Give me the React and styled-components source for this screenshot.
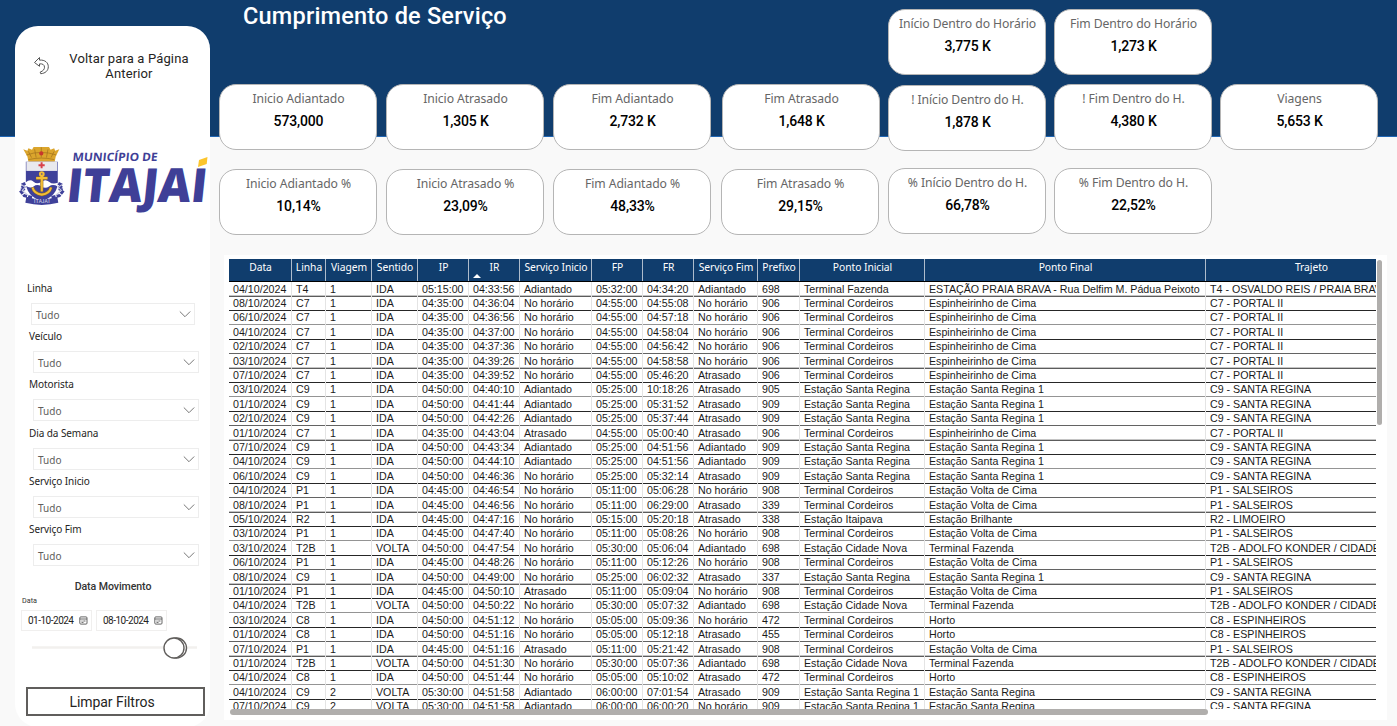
import React from "react";
import styled, { createGlobalStyle } from "styled-components";

const din = '"Roboto", "Liberation Sans", sans-serif';
const segoe = '"Noto Sans", "Open Sans", sans-serif';

const Global = createGlobalStyle`
  * { box-sizing: border-box; }
  html, body { margin: 0; padding: 0; overflow: hidden; }
`;

const Page = styled.div`
  width: 1397px;
  height: 726px;
  display: flex;
  overflow: hidden;
  font-family: ${din};
  background: linear-gradient(#103d6d 0 136px, #1f66b5 136px 137px, #f9f9f9 137px);
`;

/* ---------- sidebar ---------- */

const Sidebar = styled.aside`
  width: 195px;
  height: 701px;
  margin: 26px 0 0 15px;
  flex: none;
  display: flex;
  flex-direction: column;
  background: #fff;
  border-radius: 23px;
`;

const BackLink = styled.div`
  height: 116px;
  padding: 25px 16px 0 18px;
  display: flex;
  align-items: flex-start;
  justify-content: space-between;
`;

const BackIcon = styled.svg`
  width: 18px;
  height: 20px;
  margin-top: 5px;
`;

const BackText = styled.div`
  width: 130px;
  font-size: 13px;
  line-height: 15px;
  letter-spacing: 0.14px;
  text-align: center;
  color: #252423;
`;

const Logo = styled.svg`
  width: 195px;
  height: 75px;
  flex: none;
`;

const Filters = styled.div`
  padding: 63px 0 0 14px;
  display: flex;
  flex-direction: column;
`;

const Filter = styled.div`
  height: ${(p) => p.$height || 48}px;
  margin-left: ${(p) => (p.$first ? -2 : 0)}px;
`;

const FilterLabel = styled.div`
  height: 23px;
  line-height: 17px;
  font-family: ${segoe};
  font-size: 10px;
  letter-spacing: -0.08px;
  color: #252423;
`;

const Select = styled.div`
  width: ${(p) => p.$width || 166}px;
  height: 22px;
  margin-left: 4px;
  padding: 1px 4px 0 4px;
  display: flex;
  align-items: center;
  justify-content: space-between;
  border: 1px solid #ededed;
  font-family: ${segoe};
  font-size: 10px;
  color: #605e5c;
`;

const Chevron = styled.svg`
  width: 12px;
  height: 8px;
  margin-top: -2px;
  margin-right: -1px;
`;

const DateTitle = styled.div`
  margin-top: 10px;
  padding-left: 1px;
  height: 17px;
  line-height: 16px;
  text-align: center;
  font-size: 10.6px;
  font-weight: 500;
  letter-spacing: -0.08px;
  color: #333;
`;

const DateLabel = styled.div`
  height: 14px;
  padding-left: 7px;
  line-height: 10px;
  font-size: 7.2px;
  color: #333;
`;

const DateRow = styled.div`
  display: flex;
  gap: 4px;
  padding-left: 6px;
`;

const DateInput = styled.div`
  width: 71px;
  height: 21px;
  padding: 0 3px 0 6px;
  display: flex;
  align-items: center;
  justify-content: space-between;
  border: 1px solid #f0efee;
  font-size: 10px;
  letter-spacing: -0.5px;
  white-space: nowrap;
  color: #252423;
`;

const Slider = styled.svg`
  width: 195px;
  height: 24px;
  margin-top: 5px;
  flex: none;
`;

const ClearButton = styled.button`
  width: 179px;
  height: 29px;
  margin: 27px 0 0 11px;
  padding: 0 7px 0 0;
  flex: none;
  border: 2px solid #605e5c;
  background: #fff;
  font-family: ${din};
  font-size: 14px;
  letter-spacing: -0.05px;
  color: #252423;
`;

/* ---------- main area ---------- */

const Main = styled.main`
  flex: 1;
  min-width: 0;
  display: flex;
  flex-direction: column;
`;

const TopRow = styled.header`
  height: 84px;
  padding: 0 0 0 33px;
  display: flex;
`;

const Title = styled.h1`
  width: 645px;
  margin: 0;
  padding-top: 1px;
  font-size: 23.5px;
  line-height: 30px;
  font-weight: 500;
  letter-spacing: 0.2px;
  color: #fff;
`;

const TopCards = styled.div`
  display: flex;
  gap: 8px;
  padding-top: 9px;
`;

const CardGrid = styled.div`
  display: grid;
  grid-template-columns: 167px 167px 169px 166px 166px 166px 158px;
  height: ${(p) => p.$height}px;
  padding-left: 9px;
  align-items: start;
`;

const Card = styled.div`
  width: 158px;
  height: 66px;
  margin-top: ${(p) => p.$dy || 0}px;
  margin-left: ${(p) => p.$dx || 0}px;
  padding: 4px 0 0 1px;
  border: 1px solid #b5b5b5;
  border-radius: 17px;
  background: #fff;
  text-align: center;
  white-space: nowrap;
`;

const CardLabel = styled.div`
  height: 22px;
  line-height: 20px;
  font-family: ${segoe};
  font-size: 12.2px;
  letter-spacing: -0.08px;
  color: #666;
`;

const CardValue = styled.div`
  line-height: 21px;
  font-size: 14px;
  font-weight: 500;
  letter-spacing: -0.15px;
  color: #000;
`;

/* ---------- table ---------- */

const TablePanel = styled.section`
  width: 1163px;
  height: 465px;
  margin-left: 14px;
  padding: 4px 4px 0 5px;
  background: #fff;
`;

const TableBody = styled.div`
  display: flex;
  justify-content: space-between;
`;

const Viewport = styled.div`
  width: 1147px;
  height: 450px;
  overflow: hidden;
`;

const COLS = "63px 34px 46px 46px 51px 51px 72px 51px 51px 64px 42px 125px 281px 211px";

const HeadRow = styled.div`
  display: grid;
  grid-template-columns: ${COLS};
  width: 1188px;
  height: 23px;
  background: #103d6d;
  box-shadow: inset 0 -1px #000;
`;

const HeadCell = styled.div`
  display: flex;
  flex-direction: column;
  align-items: center;
  border-right: 1px solid #aebccc;
  margin-bottom: 1px;
  padding-left: 1px;
  font-family: ${segoe};
  font-size: 10.3px;
  line-height: 16px;
  letter-spacing: -0.05px;
  color: #fff;
  white-space: nowrap;
`;

const SortArrow = styled.svg`
  width: 8px;
  height: 4px;
  margin: -1px 36px 0 0;
`;

const Row = styled.div`
  display: grid;
  grid-template-columns: ${COLS};
  width: 1188px;
  height: ${(p) => p.$height}px;
`;

const Cell = styled.div`
  display: flex;
  align-items: flex-end;
  padding: 0 0 2px 4px;
  border-right: 1px solid #e4e4e4;
  box-shadow: ${(p) => p.$rule};
  font-family: "Liberation Sans", Arial, sans-serif;
  font-size: 10.67px;
  line-height: 12px;
  color: #1b1b1b;
  white-space: nowrap;
`;

const VScroll = styled.div`
  width: 5px;
  height: 165px;
  margin-top: 1px;
  margin-right: 1px;
  border-radius: 3px;
  background: #b0aeac;
`;

const HScroll = styled.div`
  width: 978px;
  height: 6px;
  margin-left: 1px;
  border-radius: 3px;
  background: #b0aeac;
`;

/* row height and underline repeat every five rows */
const RULES = [
  [15, "inset 0 -1px #5c5c5c, inset 0 -2px #c4c4c4"],
  [14, "inset 0 -1px #262626"],
  [14, "inset 0 -1px #949494"],
  [15, "inset 0 -1px #262626"],
  [14, "inset 0 -1px #636363"],
];

const HEAD = ["Data", "Linha", "Viagem", "Sentido", "IP", "IR", "Serviço Inicio", "FP", "FR", "Serviço Fim", "Prefixo", "Ponto Inicial", "Ponto Final", "Trajeto"];

const AD = "Adiantado", NH = "No horário", AT = "Atrasado";
const TC = "Terminal Cordeiros", TF = "Terminal Fazenda", EC = "Espinheirinho de Cima";
const SR = "Estação Santa Regina", SR1 = "Estação Santa Regina 1", VC = "Estação Volta de Cima", CN = "Estação Cidade Nova";
const C7 = "C7 - PORTAL II", C9 = "C9 - SANTA REGINA", P1 = "P1 - SALSEIROS", C8 = "C8 - ESPINHEIROS";
const T2B = "T2B - ADOLFO KONDER / CIDADE NOVA";

const ROWS = [
  ["04", "T4", "1", "IDA", "05:15:00", "04:33:56", AD, "05:32:00", "04:34:20", AD, "698", TF, "ESTAÇÃO PRAIA BRAVA - Rua Delfim M. Pádua Peixoto", "T4 - OSVALDO REIS / PRAIA BRAVA"],
  ["08", "C7", "1", "IDA", "04:35:00", "04:36:04", NH, "04:55:00", "04:55:08", NH, "906", TC, EC, C7],
  ["06", "C7", "1", "IDA", "04:35:00", "04:36:56", NH, "04:55:00", "04:57:18", NH, "906", TC, EC, C7],
  ["04", "C7", "1", "IDA", "04:35:00", "04:37:00", NH, "04:55:00", "04:58:04", NH, "906", TC, EC, C7],
  ["02", "C7", "1", "IDA", "04:35:00", "04:37:36", NH, "04:55:00", "04:56:42", NH, "906", TC, EC, C7],
  ["03", "C7", "1", "IDA", "04:35:00", "04:39:26", NH, "04:55:00", "04:58:58", NH, "906", TC, EC, C7],
  ["07", "C7", "1", "IDA", "04:35:00", "04:39:52", NH, "04:55:00", "05:46:20", AT, "906", TC, EC, C7],
  ["03", "C9", "1", "IDA", "04:50:00", "04:40:10", AD, "05:25:00", "10:18:26", AT, "905", SR, SR1, C9],
  ["01", "C9", "1", "IDA", "04:50:00", "04:41:44", AD, "05:25:00", "05:31:52", AT, "909", SR, SR1, C9],
  ["02", "C9", "1", "IDA", "04:50:00", "04:42:26", AD, "05:25:00", "05:37:44", AT, "909", SR, SR1, C9],
  ["01", "C7", "1", "IDA", "04:35:00", "04:43:04", AT, "04:55:00", "05:00:40", AT, "906", TC, EC, C7],
  ["07", "C9", "1", "IDA", "04:50:00", "04:43:34", AD, "05:25:00", "04:51:56", AD, "909", SR, SR1, C9],
  ["04", "C9", "1", "IDA", "04:50:00", "04:44:10", AD, "05:25:00", "04:51:56", AD, "909", SR, SR1, C9],
  ["06", "C9", "1", "IDA", "04:50:00", "04:46:36", NH, "05:25:00", "05:32:14", AT, "909", SR, SR1, C9],
  ["04", "P1", "1", "IDA", "04:45:00", "04:46:54", NH, "05:11:00", "05:06:28", NH, "908", TC, VC, P1],
  ["08", "P1", "1", "IDA", "04:45:00", "04:46:56", NH, "05:11:00", "06:29:00", AT, "339", TC, VC, P1],
  ["05", "R2", "1", "IDA", "04:45:00", "04:47:16", NH, "05:15:00", "05:20:18", AT, "338", "Estação Itaipava", "Estação Brilhante", "R2 - LIMOEIRO"],
  ["03", "P1", "1", "IDA", "04:45:00", "04:47:40", NH, "05:11:00", "05:08:26", NH, "908", TC, VC, P1],
  ["03", "T2B", "1", "VOLTA", "04:50:00", "04:47:54", NH, "05:30:00", "05:06:04", AD, "698", CN, TF, T2B],
  ["06", "P1", "1", "IDA", "04:45:00", "04:48:26", NH, "05:11:00", "05:12:26", NH, "908", TC, VC, P1],
  ["08", "C9", "1", "IDA", "04:50:00", "04:49:00", NH, "05:25:00", "06:02:32", AT, "337", SR, SR1, C9],
  ["01", "P1", "1", "IDA", "04:45:00", "04:50:10", AT, "05:11:00", "05:09:04", NH, "908", TC, VC, P1],
  ["04", "T2B", "1", "VOLTA", "04:50:00", "04:50:22", NH, "05:30:00", "05:07:32", AD, "698", CN, TF, T2B],
  ["03", "C8", "1", "IDA", "04:50:00", "04:51:12", NH, "05:05:00", "05:09:36", NH, "472", TC, "Horto", C8],
  ["01", "C8", "1", "IDA", "04:50:00", "04:51:16", NH, "05:05:00", "05:12:18", AT, "455", TC, "Horto", C8],
  ["07", "P1", "1", "IDA", "04:45:00", "04:51:16", AT, "05:11:00", "05:21:42", AT, "908", TC, VC, P1],
  ["01", "T2B", "1", "VOLTA", "04:50:00", "04:51:30", NH, "05:30:00", "05:07:36", AD, "698", CN, TF, T2B],
  ["04", "C8", "1", "IDA", "04:50:00", "04:51:44", NH, "05:05:00", "05:10:02", AT, "472", TC, "Horto", C8],
  ["04", "C9", "2", "VOLTA", "05:30:00", "04:51:58", AD, "06:00:00", "07:01:54", AT, "909", SR1, SR, C9],
  ["07", "C9", "2", "VOLTA", "05:30:00", "04:51:58", AD, "06:00:00", "06:00:20", NH, "909", SR1, SR, C9],
];

const FILTERS = [
  ["Linha", 48], ["Veículo", 48], ["Motorista", 49], ["Dia da Semana", 48], ["Serviço Inicio", 48], ["Serviço Fim", 48],
];

const MIDDLE = [
  ["Inicio Adiantado", "573,000"],
  ["Inicio Atrasado", "1,305 K"],
  ["Fim Adiantado", "2,732 K"],
  ["Fim Atrasado", "1,648 K"],
  ["! Início Dentro do H.", "1,878 K", 1],
  ["! Fim Dentro do H.", "4,380 K"],
  ["Viagens", "5,653 K"],
];

const PERCENT = [
  ["Inicio Adiantado %", "10,14%", 1],
  ["Inicio Atrasado %", "23,09%", 1],
  ["Fim Adiantado %", "48,33%", 1],
  ["Fim Atrasado %", "29,15%", 1, -1],
  ["% Início Dentro do H.", "66,78%"],
  ["% Fim Dentro do H.", "22,52%"],
];

function Metric({ data: [label, value, dy, dx] }) {
  return (
    <Card $dy={dy} $dx={dx}>
      <CardLabel>{label}</CardLabel>
      <CardValue>{value}</CardValue>
    </Card>
  );
}

function Crest() {
  return (
    <g transform="translate(-1 -3) scale(1.03)">
      {/* mural crown */}
      <path d="M9 10l4 1.500 1-2.500 3.500 1.500 1.500-2.800h15l1.500 2.800 3.500-1.500 1 2.500 4-1.500-3.500 7-1 5H14l-1-5z" fill="#dba52c" />
      <path d="M14 12l3 6M20 10l1.500 8M26.500 8v10M33 10l-1.500 8M39 12l-3 6M12 15.500q14.500-5 29 0M14 20q13-3 25 0" stroke="#9b6c1b" strokeWidth=".6" fill="none" />
      <circle cx="26.500" cy="14" r="2" fill="#c8372d" />
      {/* shield */}
      <path d="M11.500 22h31v20q0 13-15.500 18.500Q11.500 55 11.500 42z" fill="#3f419a" />
      <path d="M12 22h30v9H12z" fill="#e9e9ee" />
      <path d="M26.800 22.500v6M23.800 25.500h6" stroke="#d9414a" strokeWidth="1.900" />
      <path d="M11.500 42q4-3.500 7.500-.5t7.500 0 7.500 0 8.500 1v3.500q-5-2.500-8.500 0t-7.500 0-7.500 0-7.500-.5z" fill="#fff" />
      {/* anchor */}
      <g stroke="#8a6a26" strokeWidth="3" fill="none">
        <path d="M27 36v15M21.500 38h11M18 47q1.500 6 9 7 7.500-1 9-7" />
      </g>
      <g stroke="#f2bd35" strokeWidth="2" fill="none">
        <circle cx="27" cy="34" r="1.800" />
        <path d="M27 36v15M21.500 38h11M18 47q1.500 6 9 7 7.500-1 9-7" />
      </g>
      {/* side scrolls */}
      <g stroke="#3f419a" strokeWidth="3" fill="none" strokeDasharray="4 1">
        <path d="M11 43l-4 2 4 3-5 2 4 5 8 2" />
        <path d="M43 43l4 2-4 3 5 2-4 5-8 2" />
      </g>
      <path d="M7 44l4 3-3 3 6 5M47 44l-4 3 3 3-6 5" stroke="#c9cbe2" strokeWidth="1" fill="none" />
      {/* ribbon */}
      <path d="M12 56q15 5 30 0l1 6q-16 4-32 0z" fill="#3f419a" />
      <text x="19.500" y="62.500" fill="#c9cbe2" fontFamily="Lato, sans-serif" fontWeight="700" fontSize="4.500" textLength="15">ITAJAÍ</text>
    </g>
  );
}

function CalendarIcon() {
  return (
    <svg width="9" height="9" viewBox="0 0 9 9" fill="none" stroke="#555" strokeWidth=".9">
      <rect x=".8" y=".9" width="7.200" height="7.200" rx="1" />
      <path d="M.8 3h7.200M2.500 5h1M4.300 5h2.200M2.500 6.400h2" />
    </svg>
  );
}

export default function App() {
  return (
    <Page>
      <Global />
      <Sidebar>
        <BackLink>
          <BackIcon viewBox="0 0 18 20" fill="none" stroke="#555" strokeWidth="1" strokeLinejoin="round">
            <path d="M1.500 6.500L6.500 1.500v2.600c5.500-.4 8.800 2.500 8.800 6.600 0 4-3 6.700-7.600 7l-.5-1.600c2.900-1 4.300-2.800 4.300-4.900 0-2.400-1.900-3.700-5-3.300v2.400z" />
          </BackIcon>
          <BackText>Voltar para a Página Anterior</BackText>
        </BackLink>
        <Logo viewBox="0 0 195 75">
          <defs>
            <clipPath id="capline"><path d="M40 26h160v49H40z" /></clipPath>
          </defs>
          <Crest />
          <g transform="translate(0 60) skewX(-6) translate(0 -60)" fontFamily="Open Sans, sans-serif" fontWeight="800">
            <text x="53" y="19.500" fill="#3f3f97" fontWeight="700" fontSize="11.500" textLength="85" lengthAdjust="spacingAndGlyphs">MUNICÍPIO DE</text>
            <text x="50.500" y="60" fill="#3f3f97" fontSize="47" textLength="140" lengthAdjust="spacingAndGlyphs" clipPath="url(#capline)">ITAJAÍ</text>
          </g>
          <path d="M184 18l8.500-3-.8 7-8.700 3z" fill="#fcc52c" />
        </Logo>
        <Filters>
          {FILTERS.map(([name, height], i) => (
            <Filter key={name} $height={height} $first={i === 0}>
              <FilterLabel>{name}</FilterLabel>
              <Select $width={i === 0 ? 164 : 166}>
                <span>Tudo</span>
                <Chevron viewBox="0 0 12 8" fill="none" stroke="#777" strokeWidth="1">
                  <path d="M.8 1.500L6 6.700l5.200-5.200" />
                </Chevron>
              </Select>
            </Filter>
          ))}
        </Filters>
        <DateTitle>Data Movimento</DateTitle>
        <DateLabel>Data</DateLabel>
        <DateRow>
          <DateInput>01-10-2024<CalendarIcon /></DateInput>
          <DateInput>08-10-2024<CalendarIcon /></DateInput>
        </DateRow>
        <Slider viewBox="0 0 195 24">
          <path d="M17 11.500h165" stroke="#f2f0ee" strokeWidth="2.500" />
          <circle cx="161.500" cy="12" r="10" fill="#fff" stroke="#605e5c" strokeWidth="1.400" />
          <circle cx="159" cy="12" r="10" fill="#fff" stroke="#605e5c" strokeWidth="1.400" />
        </Slider>
        <ClearButton>Limpar Filtros</ClearButton>
      </Sidebar>
      <Main>
        <TopRow>
          <Title>Cumprimento de Serviço</Title>
          <TopCards>
            <Metric data={["Início Dentro do Horário", "3,775 K"]} />
            <Metric data={["Fim Dentro do Horário", "1,273 K"]} />
          </TopCards>
        </TopRow>
        <CardGrid $height={84}>
          {MIDDLE.map((m) => <Metric key={m[0]} data={m} />)}
        </CardGrid>
        <CardGrid $height={87}>
          {PERCENT.map((m) => <Metric key={m[0]} data={m} />)}
        </CardGrid>
        <TablePanel>
          <TableBody>
            <Viewport>
              <HeadRow>
                {HEAD.map((h) => (
                  <HeadCell key={h}>
                    {h}
                    {h === "IR" && <SortArrow viewBox="0 0 8 4"><path d="M0 4l4-4 4 4z" fill="#fff" /></SortArrow>}
                  </HeadCell>
                ))}
              </HeadRow>
              {ROWS.map((r, i) => {
                const [height, rule] = RULES[i % 5];
                return (
                  <Row key={i} $height={height}>
                    {r.map((v, j) => (
                      <Cell key={j} $rule={rule}>{j === 0 ? `${v}/10/2024` : v}</Cell>
                    ))}
                  </Row>
                );
              })}
            </Viewport>
            <VScroll />
          </TableBody>
          <HScroll />
        </TablePanel>
      </Main>
    </Page>
  );
}
